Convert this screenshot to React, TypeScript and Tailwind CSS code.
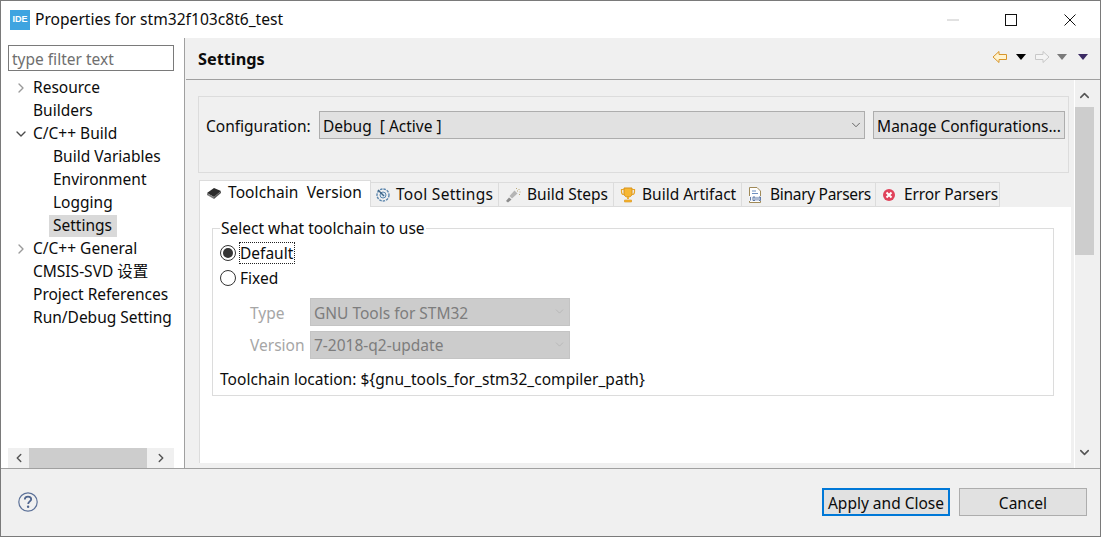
import { ChevronDown, ChevronLeft, ChevronRight, ChevronUp } from "lucide-react"

const treeRows = [
	{ label: "Resource", indent: "pl-[32px]", arrow: "right" },
	{ label: "Builders", indent: "pl-[32px]" },
	{ label: "C/C++ Build", indent: "pl-[32px]", arrow: "down" },
	{ label: "Build Variables", indent: "pl-[52px]" },
	{ label: "Environment", indent: "pl-[52px]" },
	{ label: "Logging", indent: "pl-[52px]" },
	{ label: "Settings", indent: "pl-[52px]", selected: true },
	{ label: "C/C++ General", indent: "pl-[32px]", arrow: "right" },
	{ label: "CMSIS-SVD 设置", indent: "pl-[32px]" },
	{ label: "Project References", indent: "pl-[32px]" },
	{ label: "Run/Debug Setting", indent: "pl-[32px]" },
]

const ChipIcon = () => (
	<svg width="16" height="14" viewBox="0 0 16 14">
		<path d="M1 7 L8 2 L15 5 L8 11 Z" fill="#2b2b2b" />
		<path d="M1 7 L8 11 L8 13 L1 9 Z" fill="#777" />
		<path d="M8 11 L15 5 L15 7 L8 13 Z" fill="#555" />
	</svg>
)

const ToolIcon = () => (
	<svg width="16" height="16" viewBox="0 0 16 16" fill="none">
		<circle cx="8" cy="8" r="6" stroke="#5b86ad" strokeWidth="1.4" strokeDasharray="2.5 1" />
		<circle cx="8" cy="8" r="3" fill="#dce8f2" stroke="#5b86ad" />
		<path d="M3 3 L9 9" stroke="#3f6485" strokeWidth="1.4" />
	</svg>
)

const StepsIcon = () => (
	<svg width="16" height="16" viewBox="0 0 16 16" fill="none">
		<path d="M1 14 L4 10.5 L6.5 12.5 L3 15.5 Z" fill="#8c8c8c" />
		<path d="M4.5 9 L9.5 3.5 L12.5 6.5 L7 11.5 Z" fill="#b5b5b5" />
		<path d="M11 1.5 h1 M13.5 2.5 h1 M12 4 h1 M14.5 5 h1 M14 7.5 h1" stroke="#b8a878" strokeWidth="1" />
	</svg>
)

const TrophyIcon = () => (
	<svg width="16" height="16" viewBox="0 0 16 16" fill="none">
		<path d="M4 1 H12 V7 C12 9 10 10 8 10 C6 10 4 9 4 7 Z" fill="#f7b733" stroke="#d8921a" />
		<path d="M4 2.5 H1.5 V5 C1.5 6.5 2.5 7.5 4 7.5 M12 2.5 H14.5 V5 C14.5 6.5 13.5 7.5 12 7.5" stroke="#e5a42a" strokeWidth="1.2" />
		<path d="M7 10 H9 V12 H7 Z" fill="#f0b030" />
		<path d="M4.5 13 H11.5 V15 H4.5 Z" fill="#f7b733" stroke="#d8921a" strokeWidth="0.6" />
	</svg>
)

const BinaryIcon = () => (
	<svg width="14" height="16" viewBox="0 0 14 16" fill="none">
		<path d="M1.5 0.5 H9 L12.5 4 V15.5 H1.5 Z" fill="#fff" stroke="#a08a58" />
		<path d="M4 4 H8 M4 6.5 H10" stroke="#6d8fc0" />
		<path d="M1 9 H13 V14 H1 Z" fill="#f4f6fa" />
		<path d="M2.5 10 V13.5 M5 10 H7 V13.5 H5 Z M9 10 V13.5 M11 10 H12.5 V13.5 H11 Z" stroke="#3f5f96" strokeWidth="0.8" />
	</svg>
)

const ErrorIcon = () => (
	<svg width="14" height="14" viewBox="0 0 14 14" fill="none">
		<circle cx="7" cy="7" r="6" fill="#e0425a" />
		<path d="M4.5 4.5 L9.5 9.5 M9.5 4.5 L4.5 9.5" stroke="#fff" strokeWidth="2" />
	</svg>
)

const NavArrow = ({ flip, color, fill }: { flip?: boolean; color: string; fill: string }) => (
	<svg width="16" height="14" viewBox="0 0 16 14" className={flip ? "-scale-x-100" : ""}>
		<path d="M1 7 L7 1.5 V4.5 H14.5 V9.5 H7 V12.5 Z" fill={fill} stroke={color} strokeWidth="1" />
	</svg>
)

const Caret = ({ color }: { color: string }) => (
	<svg width="10" height="6" viewBox="0 0 10 6">
		<path d="M0 0 H10 L5 6 Z" fill={color} />
	</svg>
)

const tabs = [
	{ label: "Tool Settings", icon: <ToolIcon />, box: "w-[128px] gap-[5px] pl-[4px] tracking-[0.3px]" },
	{ label: "Build Steps", icon: <StepsIcon />, box: "w-[115px] gap-[6px] pl-[6px]" },
	{ label: "Build Artifact", icon: <TrophyIcon />, box: "w-[128px] gap-[6px] pl-[6px]" },
	{ label: "Binary Parsers", icon: <BinaryIcon />, box: "w-[134px] gap-[8px] pl-[6px] tracking-[-0.3px]" },
	{ label: "Error Parsers", icon: <ErrorIcon />, box: "w-[124px] gap-[8px] pl-[6px] tracking-[-0.1px]" },
]

const DisabledSelect = ({ label, value, labelClass }: { label: string; value: string; labelClass: string }) => (
	<div className="flex items-center h-[29px] text-[#a6a6a6]">
		<span className={`w-[60px] ${labelClass}`}>{label}</span>
		<div className="w-[260px] h-[28px] bg-[#cccccc] border border-[#c4c4c4] flex items-center justify-between pl-[3px] pr-[3px] text-[#7d7d7d]">
			<span className={labelClass}>{value}</span>
			<ChevronDown size={13} strokeWidth={1} className="text-[#a8a8a8]" />
		</div>
	</div>
)

export default function App() {
	return (
		<div
			className="w-[1101px] h-[537px] flex flex-col bg-white border border-[#7a7a7a] text-[15.5px] text-[#0c0c0c] overflow-hidden"
			style={{ fontFamily: '"Noto Sans", "Noto Sans CJK SC", sans-serif' }}
		>
			{/* title bar */}
			<div className="h-[37px] shrink-0 flex items-center pl-[9px]">
				<div className="w-[20px] h-[20px] bg-[#3fa4e0] text-white text-[9px] font-bold flex items-center justify-center" style={{ fontFamily: '"Liberation Sans", sans-serif' }}>
					IDE
				</div>
				<span className="ml-[5px] text-[15.6px]">Properties for stm32f103c8t6_test</span>
				<div className="ml-auto flex items-center">
					<svg width="14" height="2" viewBox="0 0 14 2" className="mr-[45px]">
						<path d="M1 1 H13" stroke="#c4c4c4" />
					</svg>
					<svg width="12" height="12" viewBox="0 0 12 12" className="mr-[47px]">
						<rect x="0.5" y="0.5" width="11" height="11" fill="none" stroke="#111" />
					</svg>
					<svg width="12" height="12" viewBox="0 0 12 12" className="mr-[24px]">
						<path d="M0.5 0.5 L11.5 11.5 M11.5 0.5 L0.5 11.5" stroke="#111" />
					</svg>
				</div>
			</div>

			{/* body */}
			<div className="h-[431px] shrink-0 flex border-b border-[#a0a0a0]">
				{/* tree */}
				<aside className="w-[184px] shrink-0 border-r border-[#a0a0a0] flex flex-col pt-[7px]">
					<div className="ml-[7px] w-[166px] h-[26px] border border-[#7a7a7a] flex items-center pl-[3px] pt-[3px] text-[#6f6f6f]">
						type filter text
					</div>
					<div className="mt-[5px] flex-1">
						{treeRows.map((row) => (
							<div key={row.label} className={`relative h-[23px] flex items-center ${row.indent}`}>
								{row.arrow === "right" && <ChevronRight size={16} strokeWidth={2} className="absolute left-[12px] text-[#9a9a9a]" />}
								{row.arrow === "down" && <ChevronDown size={16} strokeWidth={2} className="absolute left-[12px] text-[#4b4b4b]" />}
								{row.selected && <div className="absolute left-[48px] w-[68px] h-[22px] bg-[#d9d9d9]" />}
								<span className="relative pt-[1px]">{row.label}</span>
							</div>
						))}
					</div>
					<div className="ml-[7px] w-[166px] h-[20px] bg-[#f0f0f0] flex items-center justify-between">
						<div className="w-[21px] flex justify-center">
							<ChevronLeft size={14} strokeWidth={2.5} className="text-[#555]" />
						</div>
						<div className="w-[118px] h-full bg-[#cdcdcd]" />
						<div className="w-[27px] flex justify-center">
							<ChevronRight size={14} strokeWidth={2.5} className="text-[#555]" />
						</div>
					</div>
				</aside>

				{/* settings page */}
				<main className="flex-1 flex flex-col bg-[#f0f0f0] pl-px">
					<header className="h-[42px] shrink-0 border-b border-[#a0a0a0] flex items-center justify-between">
						<span className="ml-[12px] pt-[2px] font-bold text-[16.3px]">Settings</span>
						<div className="flex items-center mr-[12px] -mt-[3px]">
							<NavArrow color="#d8962a" fill="#fff3d0" />
							<div className="ml-[8px]"><Caret color="#000" /></div>
							<div className="ml-[8px]"><NavArrow flip color="#c8c8c8" fill="#f4f4f4" /></div>
							<div className="ml-[7px]"><Caret color="#7a7a7a" /></div>
							<div className="ml-[11px]"><Caret color="#3b2a63" /></div>
						</div>
					</header>

					<div className="flex-1 flex min-h-0">
						<div className="w-[888px] shrink-0 pl-[12px] pt-[16px] flex flex-col">
							{/* configuration box */}
							<div className="w-[871px] h-[77px] border border-[#dcdcdc] flex items-start pl-[7px] pt-[14px]">
								<span className="mt-[4px] w-[113px]">Configuration:</span>
								<div className="w-[546px] h-[28px] bg-[#e1e1e1] border border-[#adadad] flex items-center justify-between pl-[3px] pr-[1px]">
									<span className="whitespace-pre pt-[4px]">Debug  [ Active ]</span>
									<ChevronDown size={14} strokeWidth={1.5} className="text-[#555]" />
								</div>
								<div className="ml-[8px] w-[192px] h-[28px] bg-[#e1e1e1] border border-[#adadad] flex items-center justify-center pt-[4px]">
									Manage Configurations...
								</div>
							</div>

							{/* tabs */}
							<div className="mt-[7px] ml-px flex items-end h-[27px]">
								<div className="w-[172px] h-[27px] bg-white border-t border-l border-r border-[#dcdcdc] flex items-center gap-[6px] pl-[6px] pb-[2px] whitespace-pre tracking-[0.1px]">
									<ChipIcon />
									<span>Toolchain  Version</span>
								</div>
								{tabs.map((tab) => (
									<div key={tab.label} className={`${tab.box} h-[25px] border-t border-r border-b border-[#dcdcdc] flex items-center`}>
										{tab.icon}
										<span>{tab.label}</span>
									</div>
								))}
							</div>

							{/* tab body */}
							<div className="ml-px w-[872px] h-[256px] shrink-0 bg-white border-l border-[#dcdcdc] pl-[12px] pt-[11px]">
								<fieldset className="w-[842px] h-[178px] border border-[#dcdcdc] pl-[7px] pr-[7px]">
									<legend className="px-[1px] leading-[20px]">Select what toolchain to use</legend>
									<div className="flex items-center h-[25px] gap-[4px] mt-[2px]">
										<div className="w-[16px] h-[16px] rounded-full border border-[#333] flex items-center justify-center">
											<div className="w-[10px] h-[10px] rounded-full bg-[#333]" />
										</div>
										<span className="outline-1 outline-dotted outline-[#222] leading-[19px] pt-[1px] pr-[1px]">Default</span>
									</div>
									<div className="flex items-center h-[25px] gap-[4px]">
										<div className="w-[16px] h-[16px] rounded-full border border-[#333]" />
										<span className="pt-[2px]">Fixed</span>
									</div>
									<div className="mt-[7px] pl-[30px] flex flex-col gap-[4px]">
										<DisabledSelect label="Type" value="GNU Tools for STM32" labelClass="pt-[4px]" />
										<DisabledSelect label="Version" value="7-2018-q2-update" labelClass="pt-[2px]" />
									</div>
									<div className="mt-[9px] tracking-[0.03px]">Toolchain location: {"${gnu_tools_for_stm32_compiler_path}"}</div>
								</fieldset>
							</div>
						</div>

						{/* vertical scrollbar */}
						<div className="w-px shrink-0 bg-white" />
						<div className="w-[19px] shrink-0 flex flex-col items-center">
							<div className="h-[27px] w-full flex items-center justify-center pt-[4px]">
								<ChevronUp size={15} strokeWidth={2.5} className="text-[#555]" />
							</div>
							<div className="w-full h-[148px] bg-[#cdcdcd]" />
							<div className="mt-auto mb-[8px]">
								<ChevronDown size={15} strokeWidth={2.5} className="text-[#555]" />
							</div>
						</div>
						<div className="flex-1" />
					</div>
				</main>
			</div>

			{/* footer */}
			<footer className="flex-1 bg-[#f0f0f0] flex items-center justify-between pl-[17px] pr-[13px]">
				<svg width="20" height="20" viewBox="0 0 20 20" fill="none" className="-mt-[2px]">
					<circle cx="10" cy="10" r="9.2" stroke="#5d7299" strokeWidth="1.2" />
					<path d="M6.8 7.6 C6.8 5.6 8.3 4.6 10 4.6 C11.8 4.6 13.2 5.7 13.2 7.3 C13.2 9.3 10.2 9.6 10.2 12" stroke="#4f658e" strokeWidth="1.8" />
					<circle cx="10.1" cy="14.7" r="1.2" fill="#4f658e" />
				</svg>
				<div className="flex gap-[9px] -mt-[2px]">
					<div className="w-[128px] h-[28px] bg-[#e1e1e1] border-2 border-[#0078d7] flex items-center justify-center pt-[4px]">Apply and Close</div>
					<div className="w-[128px] h-[28px] bg-[#e1e1e1] border border-[#adadad] flex items-center justify-center pt-[4px]">Cancel</div>
				</div>
			</footer>
		</div>
	)
}
